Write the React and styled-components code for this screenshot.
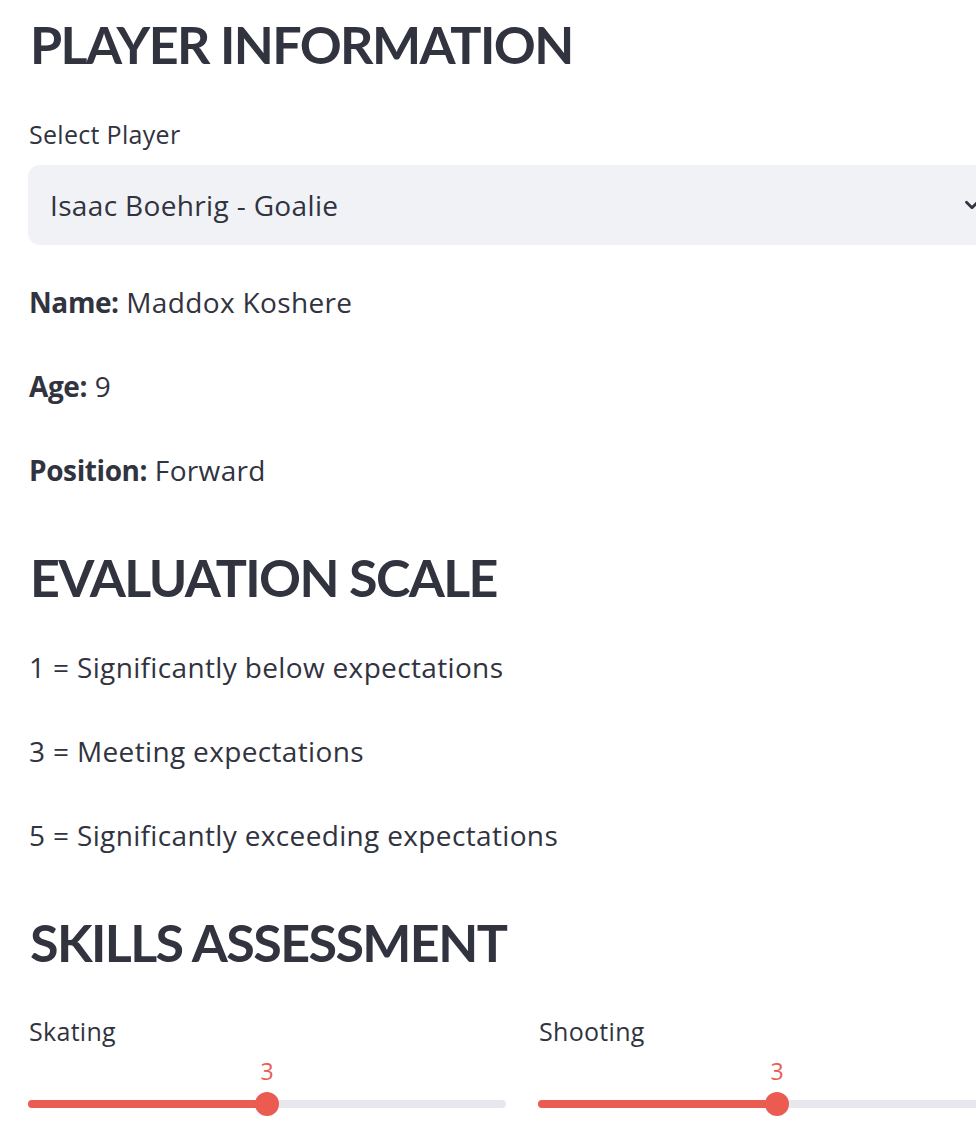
import React from 'react';
import styled, { createGlobalStyle } from 'styled-components';

const GlobalStyle = createGlobalStyle`
    html, body {
        margin: 0;
        padding: 0;
        background: #ffffff;
        overflow: hidden;
    }
    body {
        font-family: "Open Sans", "Noto Sans", sans-serif;
        color: #31333f;
    }
`;

const Main = styled.div`
    width: 988px;
    padding: 10px 0 0 28px;
    display: flex;
    flex-direction: column;
`;

const Heading = styled.h2`
    margin: ${(p) => p.$top || 0}px 0 0 2px;
    font-family: "Lato", sans-serif;
    font-size: 52px;
    line-height: 68px;
    font-weight: 700;
    letter-spacing: -1.6px;
    color: #31333f;
`;

const Label = styled.div`
    margin-top: ${(p) => p.$top || 0}px;
    margin-left: 1px;
    font-size: 25px;
    line-height: 36px;
    letter-spacing: 0.3px;
    color: #31333f;
`;

const Select = styled.div`
    margin-top: 13px;
    height: 80px;
    box-sizing: border-box;
    background: #f0f2f6;
    border-radius: 12px;
    display: flex;
    align-items: center;
    justify-content: space-between;
    padding: 0 33px 0 22px;
    font-size: 28px;
    letter-spacing: 0.35px;
    color: #31333f;
`;

const Text = styled.p`
    margin: ${(p) => p.$top || 0}px 0 0 1px;
    font-size: 28px;
    line-height: 42px;
    letter-spacing: 0.35px;
    color: #31333f;

    strong {
        font-weight: 700;
        letter-spacing: -0.4px;
    }
`;

const Columns = styled.div`
    display: grid;
    grid-template-columns: 478px 478px;
    column-gap: 32px;
    margin-top: 37px;
`;

const Field = styled.div`
    display: flex;
    flex-direction: column;
`;

const SliderWrap = styled.div`
    position: relative;
    height: 66px;
    margin-top: 7px;
`;

const Track = styled.div`
    position: absolute;
    left: 0;
    right: 0;
    top: 44px;
    height: 8px;
    border-radius: 4px;
    background: #e6e8ee;
`;

const Fill = styled.div`
    height: 100%;
    border-radius: 4px;
    background: #eb5b52;
`;

const Thumb = styled.div`
    position: absolute;
    top: 36px;
    width: 24px;
    height: 24px;
    margin-left: -12px;
    border-radius: 50%;
    background: #eb5b52;
`;

const Value = styled.div`
    position: absolute;
    top: 0;
    transform: translateX(-50%);
    font-size: 23px;
    line-height: 30px;
    color: #eb5b52;
`;

const Chevron = () => (
    <svg width="22" height="22" viewBox="0 0 24 24" fill="none" stroke="#31333f" strokeWidth="3" strokeLinecap="round" strokeLinejoin="round">
        <polyline points="6 9 12 15 18 9" />
    </svg>
);

const Slider = ({ label, value, min = 1, max = 5 }) => {
    const pct = ((value - min) / (max - min)) * 100;
    return (
        <Field>
            <Label>{label}</Label>
            <SliderWrap>
                <Value style={{ left: `${pct}%` }}>{value}</Value>
                <Track>
                    <Fill style={{ width: `${pct}%` }} />
                </Track>
                <Thumb style={{ left: `${pct}%` }} />
            </SliderWrap>
        </Field>
    );
};

const App = () => {
    const scale = [
        '1 = Significantly below expectations',
        '3 = Meeting expectations',
        '5 = Significantly exceeding expectations',
    ];

    return (
        <>
            <GlobalStyle />
            <Main>
                <Heading>PLAYER INFORMATION</Heading>
                <Label $top={38}>Select Player</Label>
                <Select>
                    <span>Isaac Boehrig - Goalie</span>
                    <Chevron />
                </Select>
                <Text $top={36}><strong>Name:</strong> Maddox Koshere</Text>
                <Text $top={42}><strong>Age:</strong> 9</Text>
                <Text $top={42}><strong>Position:</strong> Forward</Text>

                <Heading $top={52}>EVALUATION SCALE</Heading>
                {scale.map((line, i) => (
                    <Text key={line} $top={i === 0 ? 35 : 42}>{line}</Text>
                ))}

                <Heading $top={52}>SKILLS ASSESSMENT</Heading>
                <Columns>
                    <Slider label="Skating" value={3} />
                    <Slider label="Shooting" value={3} />
                </Columns>
            </Main>
        </>
    );
};

export default App;
